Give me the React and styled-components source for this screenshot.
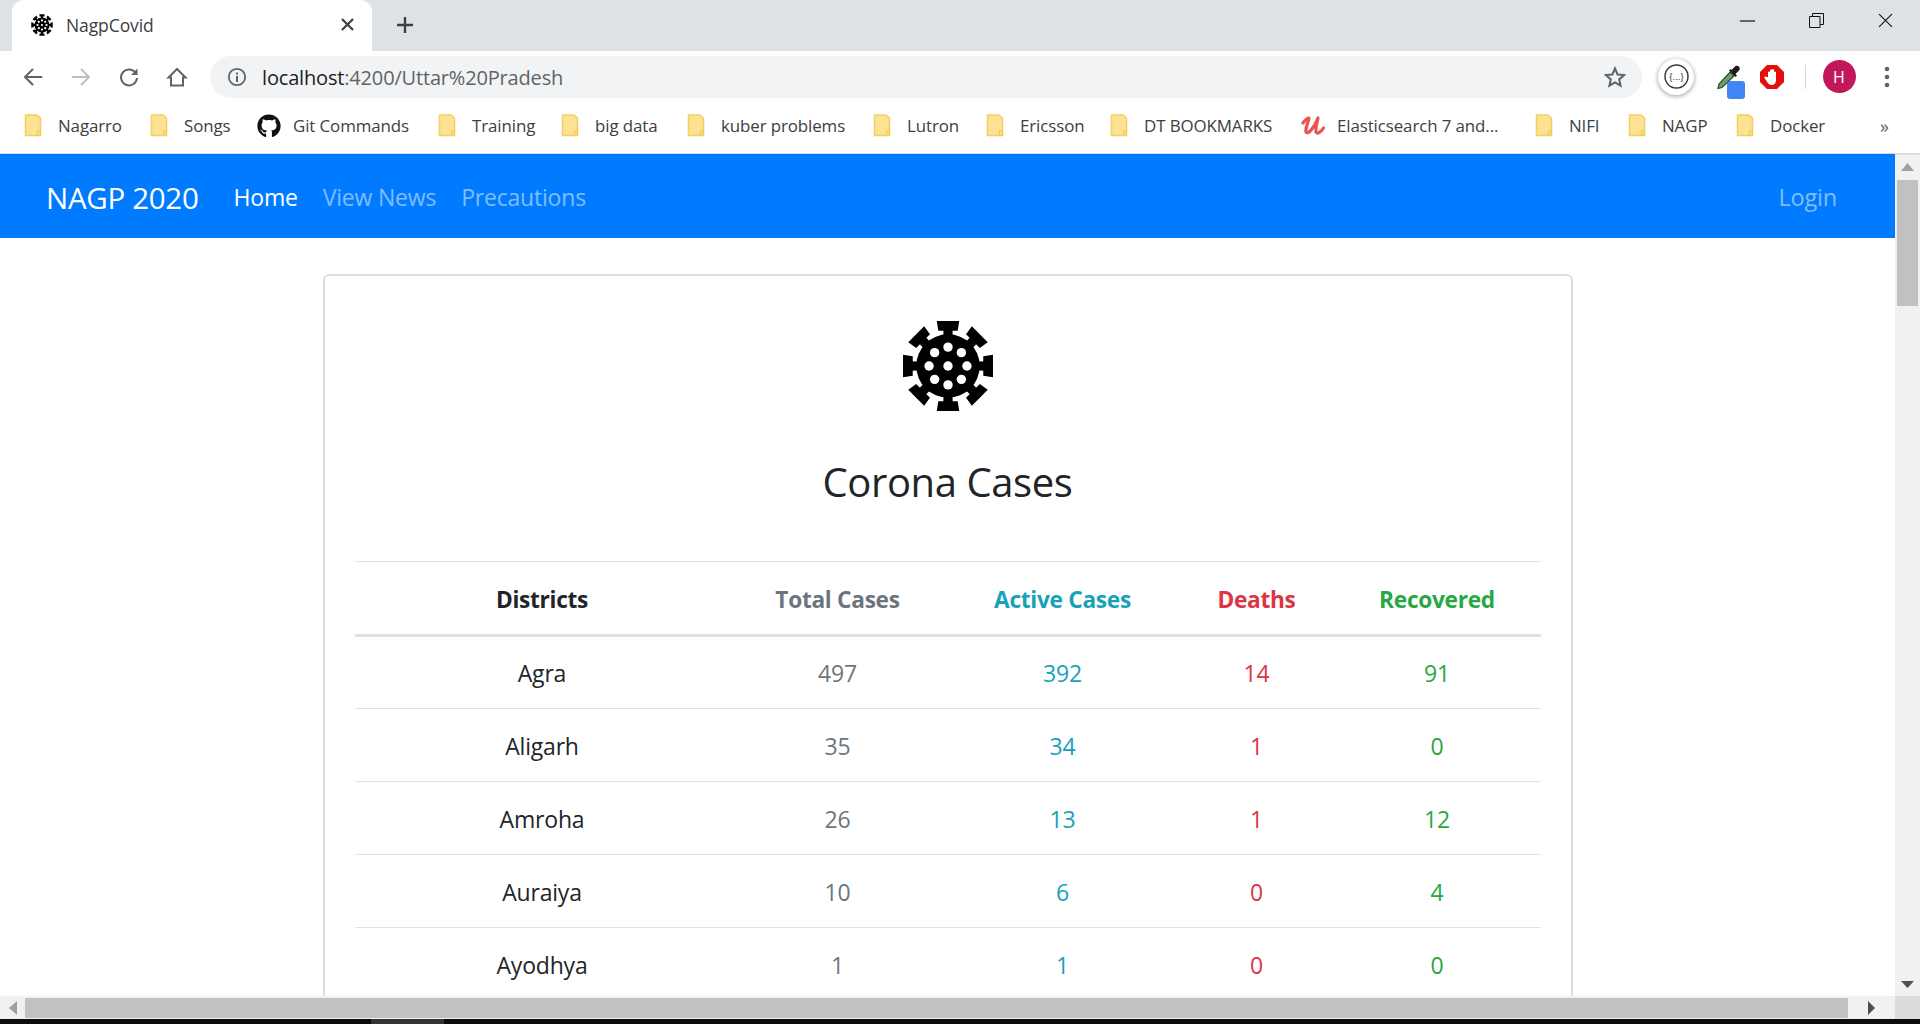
import React from "react";
import styled, { createGlobalStyle } from "styled-components";
import { FaGithub } from "react-icons/fa";

const Global = createGlobalStyle`
  html, body { margin: 0; padding: 0; height: 100%; overflow: hidden; background: #fff; }
  body { font-family: "Open Sans", "Noto Sans", "Liberation Sans", sans-serif; color: #212529; }
  * { box-sizing: border-box; }
`;

const Shell = styled.div`
  width: 1920px; height: 1024px; display: flex; flex-direction: column; overflow: hidden;
`;
const TabStrip = styled.div`
  height: 51px; flex: none; background: #dee1e6; display: flex; align-items: flex-end; padding-left: 12px;
`;
const Tab = styled.div`
  width: 360px; height: 51px; background: #fff; border-radius: 12px 12px 0 0;
  display: flex; align-items: center; padding: 0 18px 2px 19px; position: relative;
`;
const TabTitle = styled.span`
  font-size: 17.5px; color: #3c4043; margin-left: 13px; flex: 1; letter-spacing: -0.1px;
`;
const NewTab = styled.div`
  width: 66px; height: 51px; display: flex; align-items: center; justify-content: center; padding-bottom: 2px;
`;
const StripSpacer = styled.div`flex: 1;`;
const WinBtn = styled.div`
  width: 69px; height: 41px; align-self: flex-start; display: flex; align-items: center; justify-content: center;
`;
const WinControls = styled.div`
  display: flex; align-self: flex-start;
`;
const Toolbar = styled.div`
  height: 51px; flex: none; background: #fff; display: flex; align-items: center; padding-left: 9px;
`;
const Slot = styled.div`
  width: ${p => p.$w}px; height: 51px; flex: none; display: flex; align-items: center; justify-content: center; position: relative;
`;
const Omnibox = styled.div`
  width: 1432px; height: 42px; margin-left: 9px; flex: none; background: #f1f3f4; border-radius: 21px;
  display: flex; align-items: center; padding: 0 16px 0 17px;
`;
const Url = styled.div`
  flex: 1; margin-left: 15px; padding-top: 1px; font-size: 20px; color: #5f6368; letter-spacing: -0.17px; white-space: nowrap;
`;
const Host = styled.span`color: #202124;`;
const ExtCircle = styled.div`
  width: 36px; height: 36px; border-radius: 50%; background: #fff; box-shadow: 0 1px 5px rgba(0,0,0,.4);
  display: flex; align-items: center; justify-content: center;
`;
const ToolDivider = styled.div`width: 1px; height: 24px; background: #d4d6d9;`;
const Avatar = styled.div`
  width: 33px; height: 33px; border-radius: 50%; background: #c2185b; color: #fff; font-size: 16px;
  display: flex; align-items: center; justify-content: center;
`;
const BlueBadge = styled.div`
  position: absolute; left: 17px; top: 30px; width: 18px; height: 18px; border-radius: 3px; background: #4285f4;
`;
const Bookmarks = styled.div`
  height: 52px; flex: none; background: #fff; display: flex; align-items: center; padding: 0 0 4px 24px;
  border-bottom: 1px solid #d8dadd;
`;
const Mark = styled.div`
  width: ${p => p.$w}px; flex: none; display: flex; align-items: center; white-space: nowrap; overflow: hidden;
  font-size: 16.9px; color: #3c4043; letter-spacing: -0.1px;
`;
const MarkLabel = styled.span`margin-left: ${p => p.$ml || 16}px;`;
const More = styled.div`font-size: 18px; color: #5f6368; margin-left: 6px;`;

const Viewport = styled.div`
  flex: 1; min-height: 0; display: flex;
`;
const Page = styled.div`
  flex: 1; min-width: 0; overflow: hidden; background: #fff;
`;
const NavBar = styled.nav`
  height: 84px; background: #007bff; display: flex; align-items: center; padding: 2px 58px 0 46px;
`;
const Brand = styled.div`font-size: 29.5px; color: #fff; margin-right: 35px; letter-spacing: -0.3px;`;
const NavLink = styled.div`
  font-size: 23px; color: ${p => (p.$active ? "#fff" : "rgba(255,255,255,.5)")}; margin-right: 25px; letter-spacing: -0.2px;
`;
const NavGrow = styled.div`flex: 1;`;
const Login = styled.div`font-size: 23.5px; color: rgba(255,255,255,.5); letter-spacing: -0.2px;`;
const Card = styled.section`
  width: 1250px; margin: 36px auto 0; height: 900px; border: 2px solid #dcdee0; border-radius: 6px; padding: 44px 30px 0;
  display: flex; flex-direction: column;
`;
const Hero = styled.div`display: flex; justify-content: center;`;
const Title = styled.h2`
  margin: 46px 0 55px; font-weight: 400; font-size: 40px; line-height: 48px; text-align: center; color: #212529; letter-spacing: -0.4px;
`;
const Table = styled.table`
  width: 100%; border-collapse: collapse; table-layout: fixed; border-top: 1px solid #dee2e6;
`;
const Col = styled.col`width: ${p => p.$w}px;`;
const tones = { dark: "#212529", gray: "#6c757d", info: "#17a2b8", red: "#dc3545", green: "#28a745" };
const Th = styled.th`
  height: 74px; border-bottom: 3px solid #dee2e6; text-align: center; font-size: 22.7px; font-weight: 700; padding: 3px 0 0;
  color: ${p => tones[p.$tone]}; letter-spacing: -0.3px;
`;
const Td = styled.td`
  height: 73px; border-bottom: 1px solid #dee2e6; text-align: center; font-size: 23px; padding: 1px 0 0;
  color: ${p => tones[p.$tone]}; letter-spacing: -0.2px;
`;

const VBar = styled.div`
  width: 25px; flex: none; background: #f1f1f1; display: flex; flex-direction: column; align-items: center;
  border-top: 1px solid #e0e0e0;
`;
const VThumb = styled.div`width: 21px; height: 126px; margin-top: 1px; background: #c1c1c1;`;
const ArrowBox = styled.div`
  height: ${p => p.$h}px; width: ${p => p.$w}px; flex: none; display: flex; align-items: center; justify-content: center;
`;
const VGrow = styled.div`flex: 1;`;
const HBar = styled.div`
  height: 23px; flex: none; background: #f1f1f1; display: flex; align-items: center;
`;
const HThumb = styled.div`width: 1823px; height: 20px; background: #c1c1c1;`;
const HGrow = styled.div`flex: 1; display: flex; justify-content: center; align-items: center;`;
const Corner = styled.div`width: 25px; height: 23px; flex: none; background: #dcdcdc;`;
const Strip = styled.div`
  height: 5px; flex: none; background: #0b0b0b; padding-left: 371px;
`;
const StripTab = styled.div`width: 73px; height: 5px; background: #333;`;

const Virus = ({ size, color = "#000" }) => {
  const angles = [0, 45, 90, 135, 180, 225, 270, 315];
  return (
    <svg width={size} height={size} viewBox="0 0 90 90">
      <mask id={`v${size}`}>
        <rect width="90" height="90" fill="#fff" />
        <circle cx="45" cy="45" r="4.6" fill="#000" />
        {angles.map(a => (
          <circle key={a} cx={45 + 18.5 * Math.sin((a * Math.PI) / 180)} cy={45 - 18.5 * Math.cos((a * Math.PI) / 180)} r="4.6" fill="#000" />
        ))}
      </mask>
      <g mask={`url(#v${size})`} fill={color}>
        <circle cx="45" cy="45" r="31" />
        {angles.map(a => (
          <g key={a} transform={`rotate(${a} 45 45)`}>
            <rect x="40.5" y="6" width="9" height="14" />
            <path d="M34 1 L56 1 L54.5 10.5 L35.5 10.5 Z" />
          </g>
        ))}
      </g>
    </svg>
  );
};

const Folder = () => (
  <svg width="18" height="23" viewBox="0 0 18 23">
    <path d="M1.5 1h11.5l3.5 3v17.5h-15z" fill="#fde293" stroke="#f4d061" strokeWidth="1.5" />
    <path d="M13.5 21.5v-3.5a1.5 1.5 0 0 1 3 0v3.5" fill="none" stroke="#f4c94d" strokeWidth="1.2" />
  </svg>
);

const Udemy = () => (
  <svg width="25" height="24" viewBox="0 0 25 24">
    <path d="M3 9 C5 6 7.5 4 9 4 C8 9 5 15 6 18 C8 21 14 14 18 4 C17 9 15 16 16 18 C17.5 20.5 21 18 23.5 14" fill="none" stroke="#ec5252" strokeWidth="3.2" strokeLinecap="round" strokeLinejoin="round" />
  </svg>
);

const stroke = { fill: "none", strokeLinecap: "round", strokeLinejoin: "round" };
const Back = ({ c = "#5f6368", flip }) => (
  <svg width="20" height="20" viewBox="0 0 20 20" style={flip ? { transform: "scaleX(-1)" } : undefined}>
    <path d="M18.5 10H2.5M9.5 2.5L2 10l7.5 7.5" stroke={c} strokeWidth="2" {...stroke} />
  </svg>
);
const Reload = () => (
  <svg width="22" height="22" viewBox="0 0 22 22">
    <path d="M18 7.5A8 8 0 1 0 19 12" stroke="#5f6368" strokeWidth="2" fill="none" />
    <path d="M19.5 2.5v6.5h-6.5z" fill="#5f6368" />
  </svg>
);
const Home = () => (
  <svg width="22" height="22" viewBox="0 0 22 22">
    <path d="M11 3L2.5 11.5H5V19.5h12V11.5h2.5z" stroke="#5f6368" strokeWidth="2" fill="none" strokeLinejoin="miter" />
  </svg>
);
const Info = () => (
  <svg width="20" height="20" viewBox="0 0 20 20">
    <circle cx="10" cy="10" r="8.2" stroke="#5f6368" strokeWidth="1.8" fill="none" />
    <rect x="9" y="9" width="2" height="6" fill="#5f6368" />
    <rect x="9" y="5.5" width="2" height="2" fill="#5f6368" />
  </svg>
);
const Star = () => (
  <svg width="22" height="22" viewBox="0 0 22 22">
    <path d="M11 2.5l2.6 6 6.4.6-4.8 4.3 1.4 6.3L11 16.4l-5.6 3.3 1.4-6.3L2 9.1l6.4-.6z" stroke="#5f6368" strokeWidth="2" fill="none" strokeLinejoin="miter" />
  </svg>
);
const Eyedropper = () => (
  <svg width="28" height="28" viewBox="0 0 28 28">
    <path d="M3 25.5L4 21 15 9l4 4L7 24.5z" fill="#6d9e6b" stroke="#2d4a2d" strokeWidth="1.2" />
    <path d="M14 7.5l6.5 6.5 1.5-1.5-1.5-1.5 4-4a3 3 0 0 0-4-4l-4 4-1-1z" fill="#1c1c1c" />
  </svg>
);
const StopHand = () => (
  <svg width="26" height="26" viewBox="0 0 26 26">
    <path d="M8 1h10l7 7v10l-7 7H8l-7-7V8z" fill="#e40f0a" />
    <path d="M9 13V8.5a1 1 0 0 1 2 0V12V6.5a1 1 0 0 1 2 0V12V6a1 1 0 0 1 2 0V12.5V8.5a1 1 0 0 1 2 0V16c0 3-2 5-4.5 5-2 0-3-1-4-2.5l-3-4.5c-.6-1 .8-2 1.6-1z" fill="#fff" />
  </svg>
);
const Close = ({ s = 14, c = "#3c4043", w = 2 }) => (
  <svg width={s} height={s} viewBox="0 0 14 14">
    <path d="M1 1l12 12M13 1L1 13" stroke={c} strokeWidth={w} fill="none" />
  </svg>
);
const Tri = ({ d, c = "#505050" }) => {
  const paths = { up: "M0 8L6.5 0 13 8z", down: "M0 0h13L6.5 7z", left: "M8 0v14L0 7z", right: "M0 0l7 7-7 7z" };
  const box = { up: "0 0 13 8", down: "0 0 13 7", left: "0 0 8 14", right: "0 0 7 14" };
  const [, , w, h] = box[d].split(" ");
  return <svg width={w} height={h} viewBox={box[d]}><path d={paths[d]} fill={c} /></svg>;
};

const marks = [
  ["Nagarro", 126], ["Songs", 107], ["Git Commands", 181, "gh"], ["Training", 123], ["big data", 126],
  ["kuber problems", 186], ["Lutron", 113], ["Ericsson", 124], ["DT BOOKMARKS", 190],
  ["Elasticsearch 7 and...", 235, "ud"], ["NIFI", 93], ["NAGP", 108], ["Docker", 138],
];

const rows = [
  ["Agra", 497, 392, 14, 91], ["Aligarh", 35, 34, 1, 0], ["Amroha", 26, 13, 1, 12],
  ["Auraiya", 10, 6, 0, 4], ["Ayodhya", 1, 1, 0, 0],
];
const columns = [
  ["Districts", "dark", 375], ["Total Cases", "gray", 216], ["Active Cases", "info", 234],
  ["Deaths", "red", 154], ["Recovered", "green", 207],
];

export default function App() {
  return (
    <Shell>
      <Global />
      <TabStrip>
        <Tab>
          <Virus size={22} />
          <TabTitle>NagpCovid</TabTitle>
          <Close s={13} c="#3c4043" w={2.4} />
        </Tab>
        <NewTab>
          <svg width="18" height="18" viewBox="0 0 18 18"><path d="M9 1v16M1 9h16" stroke="#3c4043" strokeWidth="2.4" /></svg>
        </NewTab>
        <StripSpacer />
        <WinControls>
          <WinBtn><svg width="15" height="2" viewBox="0 0 15 2"><path d="M0 1h15" stroke="#111" strokeWidth="1.2" /></svg></WinBtn>
          <WinBtn><svg width="15" height="15" viewBox="0 0 15 15"><path d="M.5 3.5h10.5v11H.5zM3.5 3.5V.5h11v11h-3.5" stroke="#111" fill="none" /></svg></WinBtn>
          <WinBtn><Close s={15} c="#111" w={1} /></WinBtn>
        </WinControls>
      </TabStrip>
      <Toolbar>
        <Slot $w={48}><Back /></Slot>
        <Slot $w={48}><Back c="#bdc1c6" flip /></Slot>
        <Slot $w={48}><Reload /></Slot>
        <Slot $w={48}><Home /></Slot>
        <Omnibox>
          <Info />
          <Url><Host>localhost</Host>:4200/Uttar%20Pradesh</Url>
          <Star />
        </Omnibox>
        <Slot $w={68}>
          <ExtCircle>
            <svg width="27" height="27" viewBox="0 0 27 27">
              <circle cx="13.5" cy="13.5" r="11.5" fill="none" stroke="#333" strokeWidth="1.4" />
              <text x="13.5" y="16.5" textAnchor="middle" fontSize="9.5" fontFamily="Liberation Sans, sans-serif" fill="#333">{"{...}"}</text>
            </svg>
          </ExtCircle>
        </Slot>
        <Slot $w={38}><Eyedropper /><BlueBadge /></Slot>
        <Slot $w={48}><StopHand /></Slot>
        <Slot $w={18}><ToolDivider /></Slot>
        <Slot $w={50}><Avatar>H</Avatar></Slot>
        <Slot $w={46}>
          <svg width="6" height="22" viewBox="0 0 6 22">
            <circle cx="3" cy="3" r="2.3" fill="#5f6368" /><circle cx="3" cy="11" r="2.3" fill="#5f6368" /><circle cx="3" cy="19" r="2.3" fill="#5f6368" />
          </svg>
        </Slot>
      </Toolbar>
      <Bookmarks>
        {marks.map(([t, w, k]) => (
          <Mark key={t} $w={w}>
            {k === "gh" ? <FaGithub size={24} color="#111" /> : k === "ud" ? <Udemy /> : <Folder />}
            <MarkLabel $ml={k ? 12 : 16}>{t}</MarkLabel>
          </Mark>
        ))}
        <More>»</More>
      </Bookmarks>
      <Viewport>
        <Page>
          <NavBar>
            <Brand>NAGP 2020</Brand>
            <NavLink $active>Home</NavLink>
            <NavLink>View News</NavLink>
            <NavLink>Precautions</NavLink>
            <NavGrow />
            <Login>Login</Login>
          </NavBar>
          <Card>
            <Hero><Virus size={92} /></Hero>
            <Title>Corona Cases</Title>
            <Table>
              <colgroup>{columns.map(([n, , w]) => <Col key={n} $w={w} />)}</colgroup>
              <thead>
                <tr>{columns.map(([n, t]) => <Th key={n} $tone={t}>{n}</Th>)}</tr>
              </thead>
              <tbody>
                {rows.map(r => (
                  <tr key={r[0]}>
                    {r.map((v, i) => <Td key={i} $tone={columns[i][1]}>{v}</Td>)}
                  </tr>
                ))}
              </tbody>
            </Table>
          </Card>
        </Page>
        <VBar>
          <ArrowBox $w={25} $h={24}><Tri d="up" c="#a0a0a0" /></ArrowBox>
          <VThumb />
          <VGrow />
          <ArrowBox $w={25} $h={24}><Tri d="down" /></ArrowBox>
        </VBar>
      </Viewport>
      <HBar>
        <ArrowBox $w={25} $h={23}><Tri d="left" c="#a0a0a0" /></ArrowBox>
        <HThumb />
        <HGrow><Tri d="right" /></HGrow>
        <Corner />
      </HBar>
      <Strip><StripTab /></Strip>
    </Shell>
  );
}
